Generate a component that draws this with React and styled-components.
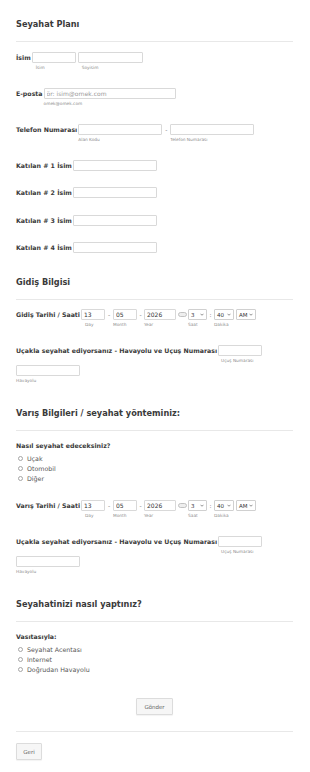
import React from 'react'
import styled, { createGlobalStyle } from 'styled-components'

const GlobalStyle = createGlobalStyle`
  body {
    margin: 0;
    background: #fff;
  }
`

const Page = styled.div`
  padding: 4px 17px 20px 16px;
  font-family: 'DejaVu Sans', Verdana, sans-serif;
  color: #333;
`

const SectionTitle = styled.h2`
  margin: 0 0 1.5px;
  padding: 15px 0 12px;
  font-size: 8.2px;
  line-height: 10px;
  font-weight: bold;
  color: #3a3a3a;
  border-bottom: 1px solid #e8e8e8;
`

const Row = styled.div`
  display: flex;
  flex-wrap: wrap;
  flex-direction: ${p => (p.$column ? 'column' : 'row')};
  align-items: flex-start;
  padding: 8px 0 8.5px;
  row-gap: 0.5px;
`

const Label = styled.span`
  font-size: 6.25px;
  font-weight: bold;
  line-height: ${p => p.$lh || 11}px;
  color: #3a3a3a;
  margin-right: 1px;
  white-space: nowrap;
`

const Field = styled.div`
  display: flex;
  flex-direction: column;
  margin-right: ${p => (p.$gap === undefined ? 2 : p.$gap)}px;
`

const TextBox = styled.input`
  box-sizing: border-box;
  width: ${p => p.$w}px;
  height: 11px;
  margin: 0;
  border: 1px solid #d9d9d9;
  border-radius: 1px;
  padding: 0 2px;
  font: 6px 'DejaVu Sans', Verdana, sans-serif;
  color: #333;
  background: #fff;
  outline: none;

  &::placeholder {
    color: #9a9a9a;
  }
`

const Sub = styled.span`
  font-size: 4.3px;
  line-height: 7.5px;
  margin-top: 1px;
  color: #8c8c8c;
  padding-left: ${p => p.$indent || 0}px;
  white-space: nowrap;
`

const Sep = styled.span`
  width: ${p => p.$w}px;
  font-size: 6px;
  line-height: 11px;
  color: #777;
  text-align: center;
`

const SelectBox = styled.div`
  box-sizing: border-box;
  display: flex;
  align-items: center;
  justify-content: space-between;
  width: ${p => p.$w}px;
  height: 11px;
  padding: 0 2px;
  border: 1px solid #d0d0d0;
  border-radius: 1px;
  background: #fff;
  font-size: 5.5px;
  color: #333;

  svg {
    width: 4px;
    height: 3px;
  }
`

const CalendarIcon = styled.span`
  display: flex;
  align-items: center;
  height: 11px;
  margin: 0 1px 0 2px;

  svg {
    width: 9px;
    height: 5px;
  }
`

const RadioList = styled.div`
  display: flex;
  flex-direction: column;
  margin-top: 2.5px;
  padding-left: 2px;
`

const RadioItem = styled.label`
  display: flex;
  align-items: center;
  gap: 4px;
  height: 10px;
  font-size: 6.3px;
  color: #555;
`

const RadioCircle = styled.span`
  box-sizing: border-box;
  width: 5px;
  height: 5px;
  border: 1px solid #a5a5a5;
  border-radius: 50%;
  background: #fff;
`

const ButtonBar = styled.div`
  display: flex;
  justify-content: ${p => (p.$center ? 'center' : 'flex-start')};
  padding: ${p => (p.$center ? '15px 0 16px' : '11px 0 0')};
  border-bottom: ${p => (p.$center ? '1px solid #e8e8e8' : '0')};
`

const Button = styled.button`
  box-sizing: border-box;
  width: ${p => p.$w}px;
  height: 17px;
  padding: 0;
  font: 5.5px 'DejaVu Sans', Verdana, sans-serif;
  color: #666;
  background: #f6f6f6;
  border: 1px solid #dcdcdc;
  border-radius: 1px;
  box-shadow: 0 1px 1px rgba(0, 0, 0, 0.05);
`

const Chevron = () => (
  <svg viewBox='0 0 8 5'>
    <polyline points='1,1 4,4 7,1' fill='none' stroke='#555' strokeWidth='1.3' />
  </svg>
)

const Input = ({ w, sub, indent, gap, value, placeholder }) => (
  <Field $gap={gap}>
    <TextBox $w={w} defaultValue={value} placeholder={placeholder} readOnly />
    {sub && <Sub $indent={indent}>{sub}</Sub>}
  </Field>
)

const Select = ({ w, value, sub, gap }) => (
  <Field $gap={gap}>
    <SelectBox $w={w}>
      {value}
      <Chevron />
    </SelectBox>
    {sub && <Sub>{sub}</Sub>}
  </Field>
)

const DateTimeRow = ({ label }) => (
  <Row>
    <Label>{label}</Label>
    <Input w={24} value='13' sub='Day' indent={4} gap={0} />
    <Sep $w={8}>-</Sep>
    <Input w={24} value='05' sub='Month' gap={0} />
    <Sep $w={7}>-</Sep>
    <Input w={32} value='2026' sub='Year' gap={0} />
    <CalendarIcon>
      <svg viewBox='0 0 9 5'>
        <rect x='0.5' y='0.5' width='8' height='4' rx='2' fill='#eee' stroke='#b5b5b5' strokeWidth='0.8' />
      </svg>
    </CalendarIcon>
    <Select w={19} value='3' sub='Saat' gap={0} />
    <Sep $w={7}>:</Sep>
    <Select w={20} value='40' sub='Dakika' />
    <Select w={20} value='AM' />
  </Row>
)

const FlightRow = () => (
  <Row>
    <Label>Uçakla seyahat ediyorsanız - Havayolu ve Uçuş Numarası</Label>
    <Input w={44} sub='Uçuş Numarası' indent={3} />
    <Input w={64} sub='Havayolu' />
  </Row>
)

const RadioGroup = ({ question, options }) => (
  <Row $column>
    <Label $lh={10}>{question}</Label>
    <RadioList>
      {options.map(option => (
        <RadioItem key={option}>
          <RadioCircle />
          {option}
        </RadioItem>
      ))}
    </RadioList>
  </Row>
)

export default function App() {
  return (
    <Page>
      <GlobalStyle />
      <SectionTitle>Seyahat Planı</SectionTitle>
      <Row>
        <Label>İsim</Label>
        <Input w={44} sub='İsim' indent={4} />
        <Input w={65} sub='Soyisim' indent={4} />
      </Row>
      <Row>
        <Label>E-posta</Label>
        <Input w={132} placeholder='ör: isim@ornek.com' sub='omek@omek.com' />
      </Row>
      <Row>
        <Label>Telefon Numarası</Label>
        <Input w={84} sub='Alan Kodu' gap={0} />
        <Sep $w={8}>-</Sep>
        <Input w={84} sub='Telefon Numarası' />
      </Row>
      {[1, 2, 3, 4].map(n => (
        <Row key={n}>
          <Label>Katılan # {n} İsim</Label>
          <Input w={84} />
        </Row>
      ))}

      <SectionTitle>Gidiş Bilgisi</SectionTitle>
      <DateTimeRow label='Gidiş Tarihi / Saati' />
      <FlightRow />

      <SectionTitle>Varış Bilgileri / seyahat yönteminiz:</SectionTitle>
      <RadioGroup question='Nasıl seyahat edeceksiniz?' options={['Uçak', 'Otomobil', 'Diğer']} />
      <DateTimeRow label='Varış Tarihi / Saati' />
      <FlightRow />

      <SectionTitle>Seyahatinizi nasıl yaptınız?</SectionTitle>
      <RadioGroup question='Vasıtasıyla:' options={['Seyahat Acentası', 'Internet', 'Doğrudan Havayolu']} />

      <ButtonBar $center>
        <Button $w={37}>Gönder</Button>
      </ButtonBar>
      <ButtonBar>
        <Button $w={26}>Geri</Button>
      </ButtonBar>
    </Page>
  )
}
